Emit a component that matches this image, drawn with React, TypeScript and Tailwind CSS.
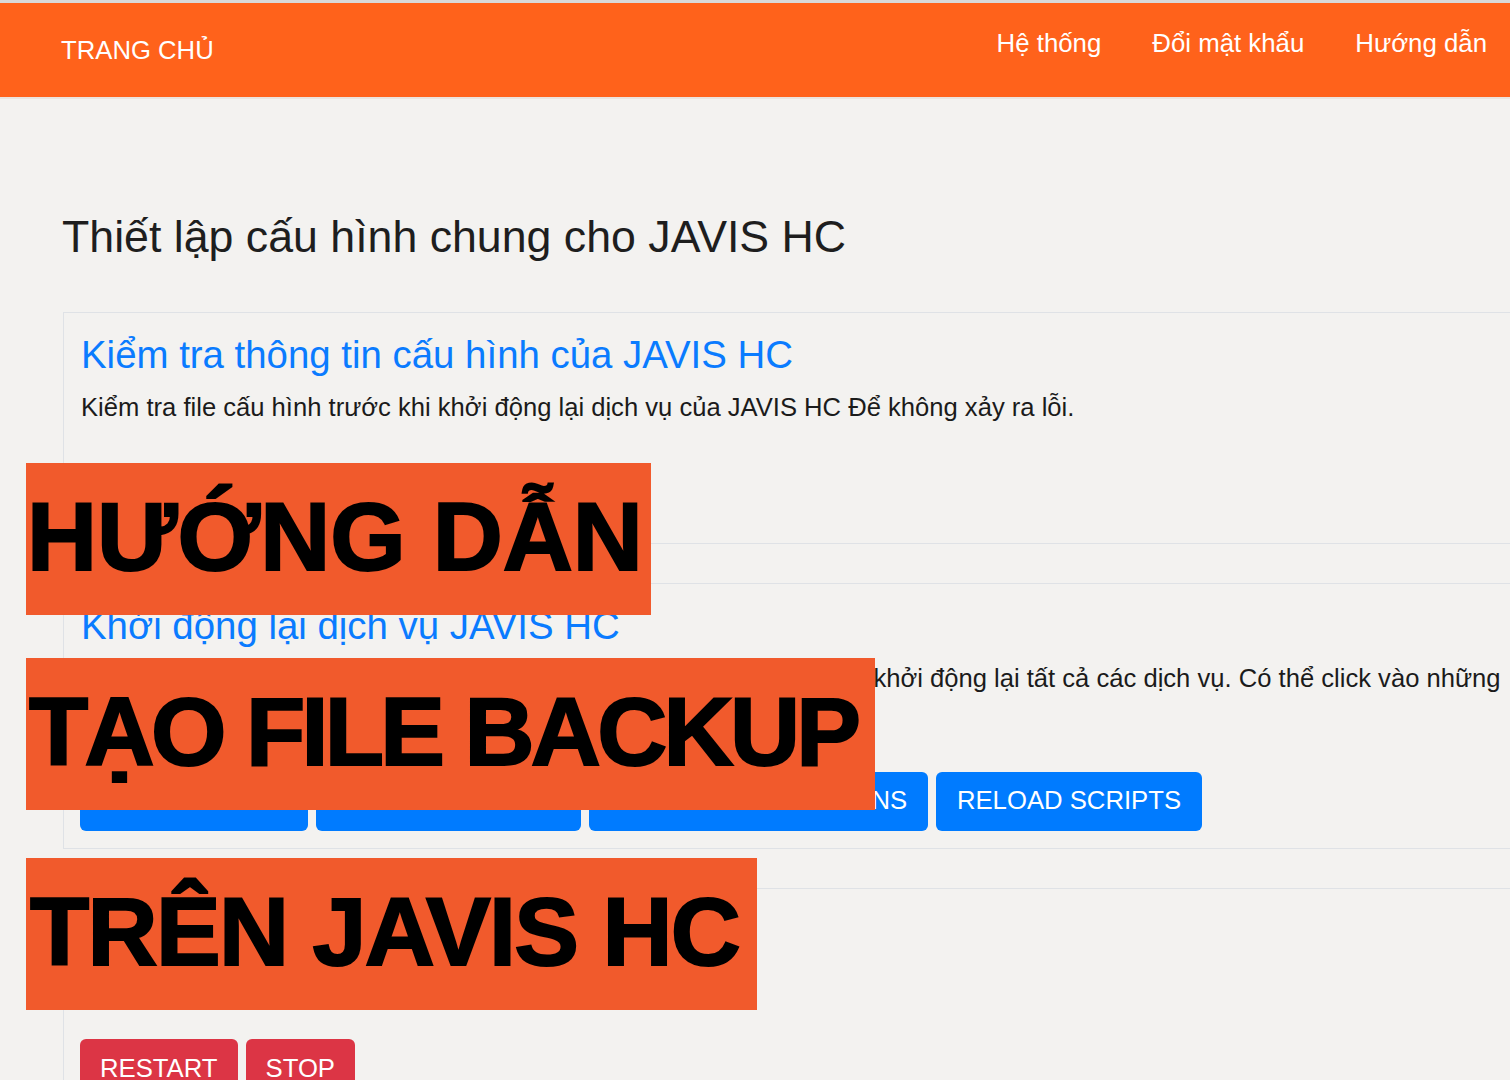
import React from "react";

const banners = [
  { text: "HƯỚNG DẪN", top: "top-[463px]", width: "w-[625px]", pad: "pl-[1px]", track: "tracking-[0px]" },
  { text: "TẠO FILE BACKUP", top: "top-[658px]", width: "w-[849px]", pad: "pl-[3px]", track: "tracking-[-3.7px]" },
  { text: "TRÊN JAVIS HC", top: "top-[858px]", width: "w-[731px]", pad: "pl-[4px]", track: "tracking-[-1.7px]" },
];

const Btn = ({ label, color, w }: { label: string; color: "blue" | "red"; w?: string }) => (
  <button
    className={`h-[59px] px-[20px] rounded-[6px] text-white text-[25.7px] uppercase leading-none text-center ${
      color === "blue" ? "bg-[#007bff]" : "bg-[#dc3545]"
    } ${w ?? ""}`}
  >
    {label}
  </button>
);

const Card = ({
  title,
  children,
  buttons,
  btnGap = "mt-[43px]",
}: {
  title: string;
  children: React.ReactNode;
  buttons: React.ReactNode;
  btnGap?: string;
}) => (
  <div className="w-[1500px] border border-[#dfe2e6] px-[16px] pt-[19px] pb-[17px]">
    <h2 className="text-[38.4px] leading-[1.2] text-[#0a7bff] pl-[1px]">{title}</h2>
    <p className="mt-[12px] text-[25.6px] leading-[34px] text-[#1b1b1b] pl-[1px]">{children}</p>
    <div className={`${btnGap} flex gap-[8px]`}>{buttons}</div>
  </div>
);

export default function App() {
  return (
    <div
      className="relative min-h-[1080px] w-full overflow-hidden bg-[#f3f2f0]"
      style={{ fontFamily: '"Liberation Sans", Arial, sans-serif' }}
    >
      <header className="flex items-start justify-between h-[99px] bg-[#ff621b] border-t-[3px] border-t-[#d9d9d9] border-b-2 border-b-[#ebe4df]">
        <a className="mt-[28px] ml-[61px] text-[25.7px] leading-[1.5] text-white">TRANG CHỦ</a>
        <nav className="mt-[21px] mr-[23px] flex gap-[51px] text-[25.8px] leading-[1.5] text-white">
          <a>Hệ thống</a>
          <a>Đổi mật khẩu</a>
          <a>Hướng dẫn</a>
        </nav>
      </header>

      <main className="pl-[63px] pt-[111px]">
        <h1 className="text-[44.7px] leading-[1.2] text-[#1e1e1e] -ml-[1px]">
          Thiết lập cấu hình chung cho JAVIS HC
        </h1>

        <div className="mt-[48px] flex flex-col gap-[39px]">
          <Card
            title="Kiểm tra thông tin cấu hình của JAVIS HC"
            buttons={<Btn label="Check Config" color="blue" />}
          >
            Kiểm tra file cấu hình trước khi khởi động lại dịch vụ của JAVIS HC Để không xảy ra lỗi.
          </Card>

          <Card
            title="Khởi động lại dịch vụ JAVIS HC"
            buttons={
              <>
                <Btn label="Reload Core" color="blue" w="w-[228px]" />
                <Btn label="Reload Groups" color="blue" w="w-[265px]" />
                <Btn label="Reload Automations" color="blue" w="w-[339px]" />
                <Btn label="Reload Scripts" color="blue" w="w-[266px]" />
              </>
            }
          >
            Sau khi thay đổi file cấu hình, bạn cần phải sử dụng nút bên dưới, để khởi động lại tất cả các dịch vụ. Có thể click vào những
            <br />
            nút Reload để tải lại từng phần cấu hình.
          </Card>

          <Card
            title="Điều khiển server"
            btnGap="mt-[39px]"
            buttons={
              <>
                <Btn label="Restart" color="red" />
                <Btn label="Stop" color="red" />
              </>
            }
          >
            Khởi động lại hoặc dừng JAVIS HC.
          </Card>
        </div>
        <div className="h-[40px]" />
      </main>

      {banners.map((b) => (
        <div
          key={b.text}
          className={`absolute left-[26px] ${b.top} ${b.width} ${b.pad} h-[152px] bg-[#f15a2c] flex items-center overflow-hidden`}
        >
          <span
            className={`-mt-[6px] text-[97px] leading-none font-bold ${b.track} text-black whitespace-nowrap [-webkit-text-stroke:2px_black]`}
          >
            {b.text}
          </span>
        </div>
      ))}
    </div>
  );
}
